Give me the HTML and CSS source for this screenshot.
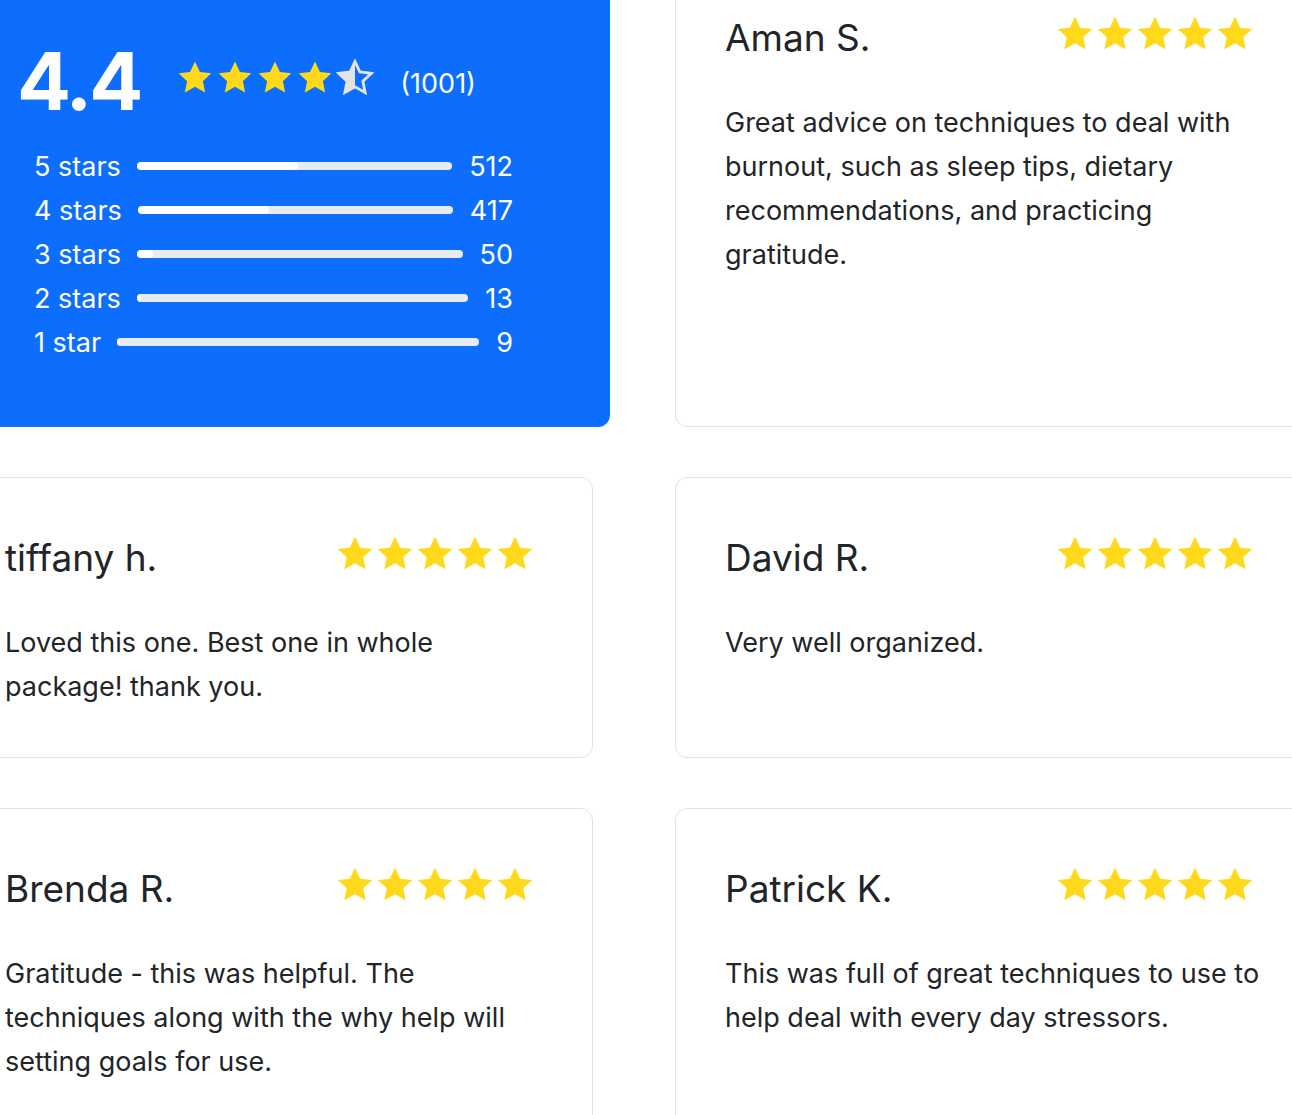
FILE: index.html
```html
<!DOCTYPE html>
<html lang="en">
<head>
<meta charset="utf-8">
<title>Reviews</title>
<link rel="stylesheet" href="styles.css">
</head>
<body>
<svg width="0" height="0" class="defs" aria-hidden="true">
  <defs>
    <path id="star" d="M12 1.6l3.1 6.6 7.2.85-5.33 4.95 1.42 7.1L12 17.55 5.61 21.1l1.42-7.1L1.7 9.05l7.2-.85z"/>
    <clipPath id="lefthalf"><rect x="0" y="0" width="12" height="24"/></clipPath>
  </defs>
</svg>
<main class="grid">
  <section class="summary">
    <div class="summary-top">
      <span class="score">4.4</span>
      <span class="stars stars-summary">
        <svg viewBox="0 0 24 24"><use href="#star"/></svg>
        <svg viewBox="0 0 24 24"><use href="#star"/></svg>
        <svg viewBox="0 0 24 24"><use href="#star"/></svg>
        <svg viewBox="0 0 24 24"><use href="#star"/></svg>
        <svg viewBox="0 0 24 24" class="half"><use href="#star" class="half-outline"/><use href="#star" class="half-fill" clip-path="url(#lefthalf)"/></svg>
      </span>
      <span class="count">(1001)</span>
    </div>
    <ul class="bars">
      <li class="bar-row"><span class="bar-label">5 stars</span><span class="track"><span class="fill" style="width:51.1%"></span></span><span class="bar-num">512</span></li>
      <li class="bar-row"><span class="bar-label">4 stars</span><span class="track"><span class="fill" style="width:41.7%"></span></span><span class="bar-num">417</span></li>
      <li class="bar-row"><span class="bar-label">3 stars</span><span class="track"><span class="fill" style="width:5%"></span></span><span class="bar-num">50</span></li>
      <li class="bar-row"><span class="bar-label">2 stars</span><span class="track"><span class="fill" style="width:1.3%"></span></span><span class="bar-num">13</span></li>
      <li class="bar-row"><span class="bar-label">1 star</span><span class="track"><span class="fill" style="width:0.9%"></span></span><span class="bar-num">9</span></li>
    </ul>
  </section>

  <article class="review">
    <header class="review-head">
      <h3 class="name">Aman S.</h3>
      <span class="stars">
        <svg viewBox="0 0 24 24"><use href="#star"/></svg>
        <svg viewBox="0 0 24 24"><use href="#star"/></svg>
        <svg viewBox="0 0 24 24"><use href="#star"/></svg>
        <svg viewBox="0 0 24 24"><use href="#star"/></svg>
        <svg viewBox="0 0 24 24"><use href="#star"/></svg>
      </span>
    </header>
    <p class="text">Great advice on techniques to deal with burnout, such as sleep tips, dietary recommendations, and practicing gratitude.</p>
  </article>

  <article class="review">
    <header class="review-head">
      <h3 class="name">tiffany h.</h3>
      <span class="stars">
        <svg viewBox="0 0 24 24"><use href="#star"/></svg>
        <svg viewBox="0 0 24 24"><use href="#star"/></svg>
        <svg viewBox="0 0 24 24"><use href="#star"/></svg>
        <svg viewBox="0 0 24 24"><use href="#star"/></svg>
        <svg viewBox="0 0 24 24"><use href="#star"/></svg>
      </span>
    </header>
    <p class="text">Loved this one. Best one in whole package! thank you.</p>
  </article>

  <article class="review">
    <header class="review-head">
      <h3 class="name">David R.</h3>
      <span class="stars">
        <svg viewBox="0 0 24 24"><use href="#star"/></svg>
        <svg viewBox="0 0 24 24"><use href="#star"/></svg>
        <svg viewBox="0 0 24 24"><use href="#star"/></svg>
        <svg viewBox="0 0 24 24"><use href="#star"/></svg>
        <svg viewBox="0 0 24 24"><use href="#star"/></svg>
      </span>
    </header>
    <p class="text">Very well organized.</p>
  </article>

  <article class="review">
    <header class="review-head">
      <h3 class="name">Brenda R.</h3>
      <span class="stars">
        <svg viewBox="0 0 24 24"><use href="#star"/></svg>
        <svg viewBox="0 0 24 24"><use href="#star"/></svg>
        <svg viewBox="0 0 24 24"><use href="#star"/></svg>
        <svg viewBox="0 0 24 24"><use href="#star"/></svg>
        <svg viewBox="0 0 24 24"><use href="#star"/></svg>
      </span>
    </header>
    <p class="text">Gratitude - this was helpful. The techniques along with the why help will setting goals for use.</p>
  </article>

  <article class="review">
    <header class="review-head">
      <h3 class="name">Patrick K.</h3>
      <span class="stars">
        <svg viewBox="0 0 24 24"><use href="#star"/></svg>
        <svg viewBox="0 0 24 24"><use href="#star"/></svg>
        <svg viewBox="0 0 24 24"><use href="#star"/></svg>
        <svg viewBox="0 0 24 24"><use href="#star"/></svg>
        <svg viewBox="0 0 24 24"><use href="#star"/></svg>
      </span>
    </header>
    <p class="text">This was full of great techniques to use to help deal with every day stressors.</p>
  </article>
</main>
</body>
</html>
```

FILE: styles.css
```css
html, body {
  margin: 0;
  padding: 0;
  background: #ffffff;
  overflow: hidden;
  height: 1115px;
}

body {
  font-family: Inter, "Noto Sans", "Liberation Sans", sans-serif;
  color: #212529;
}

.defs {
  position: absolute;
  width: 0;
  height: 0;
}

.grid {
  display: grid;
  grid-template-columns: 638px 638px;
  column-gap: 82px;
  row-gap: 50px;
  margin: -43px 0 0 -45px;
  width: 1400px;
}

/* summary card */
.summary {
  width: 655px;
  box-sizing: border-box;
  background: #0d6efd;
  border-radius: 12px;
  color: #ffffff;
  padding: 84px 97px 63px 62px;
}

.summary-top {
  display: flex;
  align-items: center;
  height: 80px;
}

.score {
  font-size: 80px;
  font-weight: 700;
  line-height: 1;
  letter-spacing: -3px;
}

.stars {
  display: flex;
  gap: 0;
  flex: none;
}

.stars svg {
  width: 40px;
  height: 40px;
  fill: #ffd91a;
  display: block;
}

.stars-summary {
  margin-left: 36px;
  margin-top: -6px;
  gap: 2px;
}

.stars-summary svg {
  width: 38px;
  height: 38px;
}

.stars-summary .half .half-outline {
  fill: none;
  stroke: #e3e3e3;
  stroke-width: 1.8;
  stroke-linejoin: miter;
}

.stars-summary .half .half-fill {
  fill: #e3e3e3;
}

.count {
  margin-left: 26px;
  font-size: 27px;
  margin-top: 4px;
}

.bars {
  list-style: none;
  margin: 23px 0 0 17px;
  padding: 0;
}

.bar-row {
  display: flex;
  align-items: center;
  gap: 16px;
  height: 44px;
  font-size: 27px;
}

.bar-num {
  margin-left: 1px;
}

.track {
  flex: 1;
  height: 8px;
  border-radius: 4px;
  background: #e9ecef;
  overflow: hidden;
  display: flex;
}

.fill {
  display: block;
  height: 100%;
  background: #ffffff;
  border-radius: 4px;
}

/* review cards */
.review {
  border: 1px solid #dee2e6;
  border-radius: 12px;
  padding: 57px 48px 48px 49px;
  box-sizing: border-box;
}

.review-head {
  display: flex;
  justify-content: space-between;
  align-items: flex-start;
}

.name {
  margin: 0;
  font-size: 37px;
  font-weight: 400;
  line-height: 46px;
  color: #212529;
}

.review-head .stars {
  margin-top: -1px;
  margin-right: 9px;
}

.text {
  margin: 40px 0 0;
  font-size: 27px;
  line-height: 44px;
  color: #212529;
}
```
